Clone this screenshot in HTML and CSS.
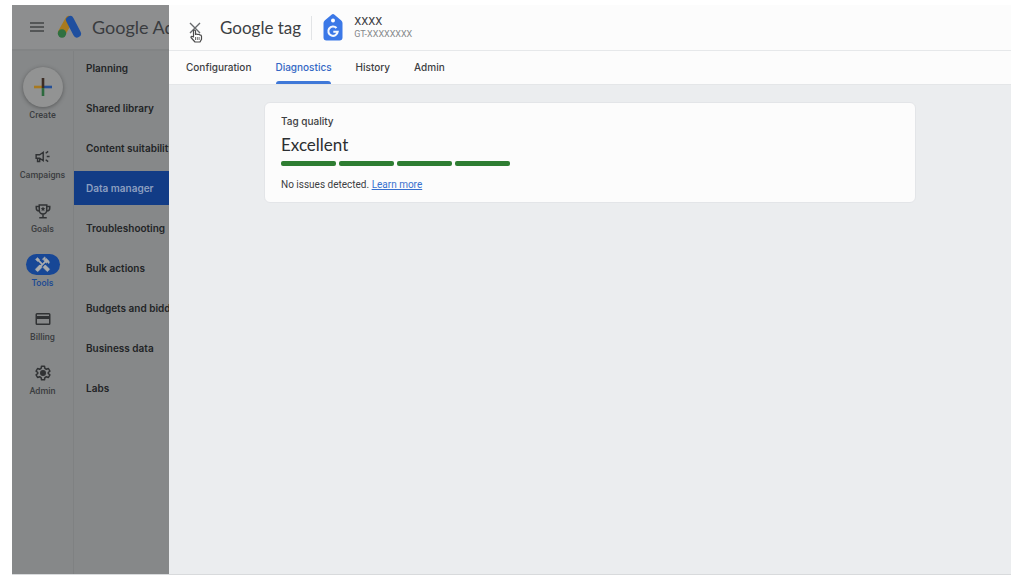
FILE: index.html
```html
<!DOCTYPE html>
<html lang="en">
<head>
  <meta charset="UTF-8" />
  <meta name="viewport" content="width=device-width, initial-scale=1" />
  <title>Google tag</title>
  <link rel="stylesheet" href="styles.css">
</head>
<body>
  <div class="window">

    <!-- Dimmed page behind the panel -->
    <div class="backdrop">
      <header class="ads-header">
        <button class="menu-btn" aria-label="Menu">
          <svg width="14" height="10" viewBox="0 0 14 10"><path d="M0 1h14M0 5h14M0 9h14" stroke="#424446" stroke-width="1.6"/></svg>
        </button>
        <svg class="ads-logo" width="26" height="24" viewBox="0 0 26 24">
          <path d="M12 5L5 17.500" stroke="#a87a1e" stroke-width="8" stroke-linecap="round"/>
          <path d="M13 5l7 13.500" stroke="#1f4f9f" stroke-width="8" stroke-linecap="round"/>
          <circle cx="5" cy="18.500" r="4.200" fill="#2f7040"/>
        </svg>
        <span class="ads-name">Google Ads</span>
      </header>

      <div class="ads-body">
        <nav class="rail">
          <button class="rail-item create">
            <span class="create-icon">
              <svg width="18" height="18" viewBox="0 0 18 18">
                <path d="M0 9h9" stroke="#a8791f" stroke-width="2.600"/>
                <path d="M9 9h9" stroke="#244f96" stroke-width="2.600"/>
                <path d="M9 0v10" stroke="#3c2c24" stroke-width="2.600"/>
                <path d="M9 10v8" stroke="#2c6a3e" stroke-width="2.600"/>
              </svg>
            </span>
            Create
          </button>
          <button class="rail-item">
            <span class="rail-icon">
              <svg width="17" height="17" viewBox="0 0 24 24" fill="none" stroke="#303234" stroke-width="2">
                <path d="M3 9.500h5l5-3.500v12l-5-3.500H3zM5 15v4h3v-4"/>
                <path d="M18 12h4M16.500 7.500l3.500-2.700M16.500 16.500l3.500 2.700"/>
              </svg>
            </span>
            Campaigns
          </button>
          <button class="rail-item">
            <span class="rail-icon">
              <svg width="18" height="18" viewBox="0 0 24 24" fill="none" stroke="#303234" stroke-width="2">
                <path d="M7 4h10v7a5 5 0 0 1-10 0zM7 6H3v2a4 4 0 0 0 4 4M17 6h4v2a4 4 0 0 1-4 4M12 16v4M7 21h10"/>
                <path d="M12 6l1 2 2 .3-1.500 1.500.4 2.200-1.900-1-1.900 1 .4-2.200L9 8.300l2-.3z" fill="#303234" stroke="none"/>
              </svg>
            </span>
            Goals
          </button>
          <button class="rail-item active">
            <span class="rail-icon">
              <svg width="17" height="17" viewBox="0 0 24 24" fill="#a9abad" stroke="#a9abad" stroke-width=".6">
                <path d="M21.670 18.170l-5.300-5.300h-.99l-2.540 2.540v.99l5.300 5.300c.39.39 1.020.39 1.410 0l2.120-2.120a.996.996 0 0 0 0-1.410z"/>
                <path d="M17.340 10.190l1.410-1.410 2.120 2.120a3 3 0 0 0 0-4.240l-3.540-3.540-1.410 1.410V1.710L15.220 1l-3.540 3.540.71.710h2.830l-1.410 1.410 1.060 1.060-2.890 2.890-4.130-4.130V5.060L4.830 2.040 2 4.870 5.030 7.900h1.410l4.130 4.130-.85.850H7.600l-5.300 5.300a.996.996 0 0 0 0 1.410l2.120 2.120c.39.39 1.020.39 1.410 0l5.300-5.300v-2.120l5.150-5.150z"/>
              </svg>
            </span>
            Tools
          </button>
          <button class="rail-item">
            <span class="rail-icon">
              <svg width="18" height="18" viewBox="0 0 24 24" fill="none" stroke="#303234" stroke-width="2">
                <rect x="3" y="5" width="18" height="14" rx="1"/><path d="M3 10h18" stroke-width="4"/>
              </svg>
            </span>
            Billing
          </button>
          <button class="rail-item">
            <span class="rail-icon">
              <svg width="18" height="18" viewBox="0 0 24 24" fill="none" stroke="#303234" stroke-width="2" stroke-linejoin="round">
                <path d="M10 3h4l.5 2.800 2 1.200 2.700-1 2 3.500-2.200 1.800v1.400l2.200 1.800-2 3.500-2.700-1-2 1.200L14 21h-4l-.5-2.800-2-1.200-2.700 1-2-3.500L5 12.700v-1.400L2.800 9.500l2-3.500 2.700 1 2-1.200z"/>
                <circle cx="12" cy="12" r="3" fill="#303234"/>
              </svg>
            </span>
            Admin
          </button>
        </nav>

        <nav class="submenu">
          <a href="#">Planning</a>
          <a href="#">Shared library</a>
          <a href="#">Content suitability</a>
          <a href="#" class="selected">Data manager</a>
          <a href="#">Troubleshooting</a>
          <a href="#">Bulk actions</a>
          <a href="#">Budgets and bidding</a>
          <a href="#">Business data</a>
          <a href="#">Labs</a>
        </nav>
      </div>
    </div>

    <!-- Google tag panel -->
    <main class="panel">
      <header class="panel-header">
        <button class="close-btn" aria-label="Close">
          <svg width="12" height="12" viewBox="0 0 12 12"><path d="M1 1l10 10M11 1L1 11" stroke="#66696c" stroke-width="1.400"/></svg>
          <svg class="cursor" width="13" height="14" viewBox="0 0 13 14">
            <path d="M3.500 8V2a1 1 0 0 1 2 0v3.500l1.200-.5 1 .5 1.300-.2.800.7 1.200.2.500 1v3L10 13H5L1 8.500q0-1.500 1.300-1z" fill="#fff" stroke="#4a4a4a" stroke-width="1.200" stroke-linejoin="round"/>
            <path d="M5.500 8v3M7.300 8v3M9.100 8v3" stroke="#4a4a4a" stroke-width=".8"/>
          </svg>
        </button>
        <h1>Google tag</h1>
        <div class="tag-info">
          <svg width="20" height="27" viewBox="0 0 20 27">
            <path d="M8.500.8a2.200 2.200 0 0 1 3 0l6.800 5.700Q19.500 7.500 19.500 9v14.500a3 3 0 0 1-3 3h-13a3 3 0 0 1-3-3V9Q.5 7.500 1.700 6.500z" fill="#3b78e7"/>
            <circle cx="10" cy="6.500" r="2" fill="#fff"/>
            <path d="M13.500 14a4.700 4.700 0 1 0 1.200 3.700H10.300" fill="none" stroke="#f4f7fd" stroke-width="2.100"/>
          </svg>
          <div>
            <div class="tag-name">XXXX</div>
            <div class="tag-id">GT-XXXXXXXX</div>
          </div>
        </div>
      </header>

      <nav class="tabs">
        <a href="#">Configuration</a>
        <a href="#" class="current">Diagnostics</a>
        <a href="#">History</a>
        <a href="#">Admin</a>
      </nav>

      <section class="card">
        <h2>Tag quality</h2>
        <p class="rating">Excellent</p>
        <div class="bars"><span></span><span></span><span></span><span></span></div>
        <p class="issues">No issues detected. <a href="#">Learn more</a></p>
      </section>
    </main>

  </div>
</body>
</html>
```

FILE: styles.css
```css
* {
  box-sizing: border-box;
  margin: 0;
  padding: 0;
}

body {
  min-height: 100vh;
  display: flex;
  padding: 5px 13px 1px 12px;
  background: #fff;
  color: #3c4043;
  font-family: Inter, "Liberation Sans", sans-serif;
  font-size: 10px;
}

button {
  border: none;
  background: none;
  font: inherit;
  color: inherit;
  cursor: pointer;
}

a {
  color: inherit;
  text-decoration: none;
}

svg {
  display: block;
  flex: none;
}

.window {
  flex: 1;
  display: flex;
  border-bottom: 1px solid #d8dadc;
}

/* Dimmed page */
.backdrop {
  width: 157px;
  flex: none;
  display: flex;
  flex-direction: column;
  overflow: hidden;
  background: #868889;
  color: #222426;
}

.ads-header {
  height: 46px;
  display: flex;
  align-items: center;
  padding-left: 18px;
  background: #8d8e8f;
  border-bottom: 2px solid #828485;
  white-space: nowrap;
}

.ads-logo {
  margin: 0 9px 0 13px;
}

.ads-name {
  font-family: Lato, sans-serif;
  font-size: 18px;
  color: #3a3c3f;
}

.ads-body {
  flex: 1;
  display: flex;
}

.rail {
  width: 62px;
  flex: none;
  padding-top: 16px;
  border-right: 1px solid #7f8182;
}

.rail-item {
  width: 100%;
  height: 54px;
  display: flex;
  flex-direction: column;
  align-items: center;
  gap: 2px;
  font-family: Roboto, sans-serif;
  font-size: 9px;
  line-height: 12px;
  font-weight: 500;
  color: #3c3e41;
}

.create {
  height: 79px;
}

.create-icon {
  width: 40px;
  height: 40px;
  display: flex;
  align-items: center;
  justify-content: center;
  border-radius: 50%;
  background: #929393;
  box-shadow: 0 1px 4px rgba(0, 0, 0, 0.35);
}

.rail-icon {
  width: 34px;
  height: 21px;
  display: flex;
  align-items: center;
  justify-content: center;
  border-radius: 11px;
}

.active {
  color: #1c4a94;
}

.active .rail-icon {
  background: #174796;
}

.submenu {
  flex: 1;
}

.submenu a {
  height: 34px;
  display: flex;
  align-items: center;
  margin-bottom: 6px;
  padding-left: 12px;
  font-weight: 600;
  white-space: nowrap;
}

.submenu .selected {
  background: #123c86;
  color: #8d9fc0;
}

/* Panel */
.panel {
  flex: 1;
  min-width: 0;
  background: #ebedef;
}

.panel-header {
  height: 46px;
  display: flex;
  align-items: center;
  background: #fcfcfc;
  border-bottom: 1px solid #e6e8ea;
}

.close-btn {
  position: relative;
  margin: 0 19px 0 20px;
}

/* Pointer over the close button */
.cursor {
  position: absolute;
  top: 7px;
  left: 1px;
}

h1 {
  font-family: Lato, sans-serif;
  font-size: 17px;
  font-weight: 400;
}

.tag-info {
  display: flex;
  align-items: center;
  gap: 11px;
  height: 24px;
  margin-left: 10px;
  padding-left: 11px;
  border-left: 1px solid #e2e4e6;
}

.tag-name {
  font-size: 10px;
  line-height: 13px;
  font-weight: 500;
}

.tag-id {
  font-family: Roboto, sans-serif;
  font-size: 9px;
  line-height: 12px;
  color: #85888b;
}

.tabs {
  height: 34px;
  display: flex;
  gap: 24px;
  padding-left: 17px;
  background: #fcfcfc;
  border-bottom: 1px solid #e4e6e8;
  font-weight: 500;
  line-height: 33px;
}

.tabs .current {
  position: relative;
  color: #3367c4;
}

.tabs .current::after {
  content: "";
  position: absolute;
  left: 1px;
  right: 1px;
  bottom: 0;
  height: 3px;
  border-radius: 3px 3px 0 0;
  background: #3f78d8;
}

.card {
  max-width: 652px;
  margin: 17px auto 0;
  padding: 10px 16px 9px;
  background: #fcfcfc;
  border: 1px solid #e3e5e8;
  border-radius: 6px;
}

h2 {
  font-size: 10px;
  line-height: 16px;
  font-weight: 500;
}

.rating {
  margin-top: 3px;
  font-family: Lato, sans-serif;
  font-size: 17px;
  line-height: 26px;
  color: #2c2f32;
}

.bars {
  display: flex;
  gap: 3px;
  margin-top: 3px;
}

.bars span {
  width: 55px;
  height: 5px;
  border-radius: 2px;
  background: #2e7d32;
}

.issues {
  margin-top: 11px;
  font-family: Roboto, sans-serif;
  font-size: 10px;
  line-height: 16px;
}

.issues a {
  color: #3870cf;
  text-decoration: underline;
}
```
